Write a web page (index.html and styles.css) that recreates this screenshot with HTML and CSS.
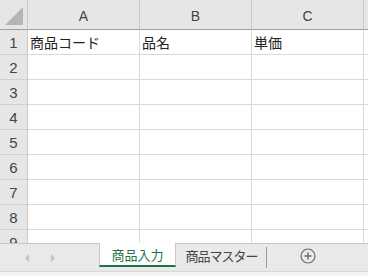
FILE: index.html
```html
<!DOCTYPE html>
<html lang="ja">
<head>
    <meta charset="UTF-8">
    <title>商品入力</title>
    <link rel="stylesheet" href="styles.css">
</head>
<body>
    <div class="sheet">
        <div class="grid">
            <div class="corner"><span class="corner-tri"></span></div>
            <div class="colhead">A</div>
            <div class="colhead">B</div>
            <div class="colhead">C</div>
            <div class="colhead rest"></div>

            <div class="rowhead">1</div>
            <div class="cell">商品コード</div>
            <div class="cell">品名</div>
            <div class="cell">単価</div>
            <div class="cell rest"></div>

            <div class="rowhead">2</div><div class="cell"></div><div class="cell"></div><div class="cell"></div><div class="cell rest"></div>
            <div class="rowhead">3</div><div class="cell"></div><div class="cell"></div><div class="cell"></div><div class="cell rest"></div>
            <div class="rowhead">4</div><div class="cell"></div><div class="cell"></div><div class="cell"></div><div class="cell rest"></div>
            <div class="rowhead">5</div><div class="cell"></div><div class="cell"></div><div class="cell"></div><div class="cell rest"></div>
            <div class="rowhead">6</div><div class="cell"></div><div class="cell"></div><div class="cell"></div><div class="cell rest"></div>
            <div class="rowhead">7</div><div class="cell"></div><div class="cell"></div><div class="cell"></div><div class="cell rest"></div>
            <div class="rowhead">8</div><div class="cell"></div><div class="cell"></div><div class="cell"></div><div class="cell rest"></div>
            <div class="rowhead">9</div><div class="cell"></div><div class="cell"></div><div class="cell"></div><div class="cell rest"></div>
        </div>
    </div>

    <div class="tabbar">
        <div class="nav">
            <span class="arrow left"></span>
            <span class="arrow right"></span>
        </div>
        <div class="tab active">商品入力</div>
        <div class="tab other">商品マスター</div>
        <div class="add">
            <svg width="16" height="16" viewBox="0 0 16 16">
                <circle cx="8" cy="8" r="7" fill="none" stroke="#6b6b6b" stroke-width="1.2"/>
                <path d="M8 4.5v7M4.5 8h7" stroke="#6b6b6b" stroke-width="1.4"/>
            </svg>
        </div>
    </div>
    <div class="status"></div>
</body>
</html>
```

FILE: styles.css
```css
body {
    margin: 0;
    width: 368px;
    height: 276px;
    overflow: hidden;
    background: #fff;
    font-family: "Noto Sans CJK JP", "Liberation Sans", sans-serif;
    color: #222;
}
.sheet {
    height: 243px;
    overflow: hidden;
}
.grid {
    display: grid;
    grid-template-columns: 28px 112px 112px 112px 20px;
    grid-auto-rows: 25px;
    grid-template-rows: 30px;
}
.corner {
    background: #e6e6e6;
    border-right: 1px solid #c8c8c8;
    border-bottom: 1px solid #9e9e9e;
    position: relative;
}
.corner-tri {
    position: absolute;
    right: 4px;
    bottom: 4px;
    width: 0;
    height: 0;
    border-left: 18px solid transparent;
    border-bottom: 18px solid #b5b5b5;
}
.colhead {
    background: #e6e6e6;
    border-right: 1px solid #c8c8c8;
    border-bottom: 1px solid #9e9e9e;
    display: flex;
    align-items: center;
    justify-content: center;
    font-size: 14px;
    color: #444;
    font-family: "Liberation Sans", sans-serif;
    padding-top: 2px;
}
.rowhead {
    background: #e6e6e6;
    border-right: 1px solid #c8c8c8;
    border-bottom: 1px solid #d0d0d0;
    display: flex;
    align-items: center;
    justify-content: center;
    font-size: 15px;
    color: #444;
    font-family: "Liberation Sans", sans-serif;
}
.cell {
    border-right: 1px solid #d9d9d9;
    border-bottom: 1px solid #d9d9d9;
    font-size: 14px;
    line-height: 24px;
    padding-left: 2px;
    white-space: nowrap;
}
.rest {
    border-right: none;
}
.tabbar {
    height: 27px;
    background: #e9e9e9;
    border-top: 1px solid #c6c6c6;
    display: flex;
    align-items: stretch;
}
.nav {
    width: 99px;
    display: flex;
    align-items: center;
    gap: 22px;
    padding-left: 25px;
    box-sizing: border-box;
}
.arrow {
    width: 0;
    height: 0;
    border-top: 4px solid transparent;
    border-bottom: 4px solid transparent;
}
.arrow.left {
    border-right: 4px solid #c4c4c4;
}
.arrow.right {
    border-left: 4px solid #c4c4c4;
}
.tab {
    display: flex;
    align-items: center;
    justify-content: center;
    font-size: 13px;
    color: #444;
    white-space: nowrap;
    box-sizing: border-box;
}
.tab.active {
    width: 77px;
    background: #fff;
    color: #217346;
    border-bottom: 2px solid #217346;
    margin-top: -1px;
    margin-bottom: 4px;
    border-left: 1px solid #c6c6c6;
    border-right: 1px solid #c6c6c6;
    padding-top: 1px;
}
.tab.other {
    width: 91px;
    padding-bottom: 4px;
    letter-spacing: -1px;
    position: relative;
}
.tab.other::after {
    content: "";
    position: absolute;
    right: 0;
    top: 3px;
    bottom: 3px;
    width: 1px;
    background: #9a9a9a;
}
.add {
    width: 82px;
    display: flex;
    align-items: center;
    justify-content: center;
    padding-bottom: 3px;
}
.status {
    height: 5px;
    background: #f3f3f3;
    border-top: 1px solid #d8d8d8;
}
```
